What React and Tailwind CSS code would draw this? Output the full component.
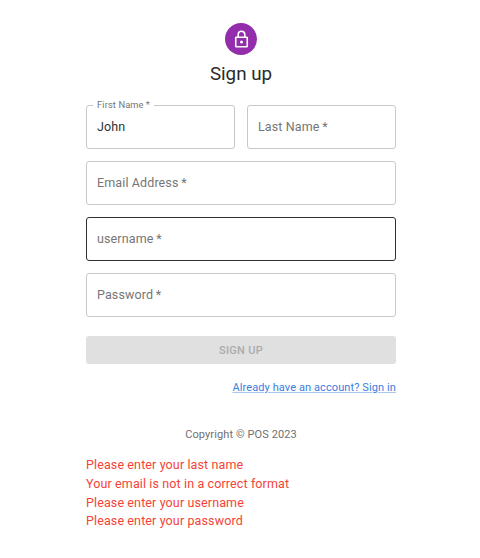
const field = "relative flex h-11 items-center rounded-[3px] border px-[10px] text-[12.5px] tracking-[0.12px]";

function Field({ label, active }) {
  return (
    <div className={`${field} ${active ? "border-[#303030]" : "border-[#c8c8c8]"} text-[#757575]`}>
      {label}&thinsp;*
    </div>
  );
}

export default function App() {
  return (
    <main className="h-[558px] w-[480px] bg-white font-['Roboto',sans-serif]">
      <div className="ml-[86px] flex w-[310px] flex-col pt-[23px]">
        <div className="flex size-8 items-center justify-center self-center rounded-full bg-[#932dac]">
          <svg viewBox="0 0 19 19" className="size-[19px] fill-none stroke-white" strokeWidth="1.6">
            <rect x="3.75" y="7.25" width="11.5" height="9.5" rx="0.6" />
            <path d="M6.2 7V4.5a3.3 3.3 0 0 1 6.6 0V7" />
            <circle cx="9.5" cy="12" r="1.5" className="fill-white stroke-none" />
          </svg>
        </div>
        <h1 className="mt-[7px] text-center text-[18.8px] leading-[25px] text-[#2b2b2b]">Sign up</h1>
        <div className="mt-[18px] grid grid-cols-2 gap-[12px]">
          <div className={`${field} border-[#c8c8c8] text-[#333333]`}>
            <span className="absolute -top-[8px] left-[6px] bg-white px-1 text-[9.3px] leading-[13px] text-[#757575]">First Name&thinsp;*</span>
            John
          </div>
          <Field label="Last Name" />
        </div>
        <div className="mt-3 flex flex-col gap-3">
          <Field label="Email Address" />
          <Field label="username" active />
          <Field label="Password" />
        </div>
        <button className="mt-[19px] h-[28px] rounded-[3px] bg-[#e0e0e0] pt-[2px] text-[11px] font-medium tracking-[0.3px] text-[#ababab]">SIGN UP</button>
        <a className="mt-[16px] self-end text-[11px] leading-4 tracking-[0.1px] text-[#3b7ddd] underline decoration-[#a9c6ef] underline-offset-1">Already have an account? Sign in</a>
        <p className="mt-[31px] text-center text-[11px] leading-4 tracking-[0.1px] text-[#707070]">Copyright © POS 2023</p>
        <div className="mt-[13px] text-[12.5px] leading-[18.75px] tracking-[0.12px] text-[#f44336]">
          <p>Please enter your last name</p>
          <p>Your email is not in a correct format</p>
          <p>Please enter your username</p>
          <p>Please enter your password</p>
        </div>
      </div>
    </main>
  );
}
